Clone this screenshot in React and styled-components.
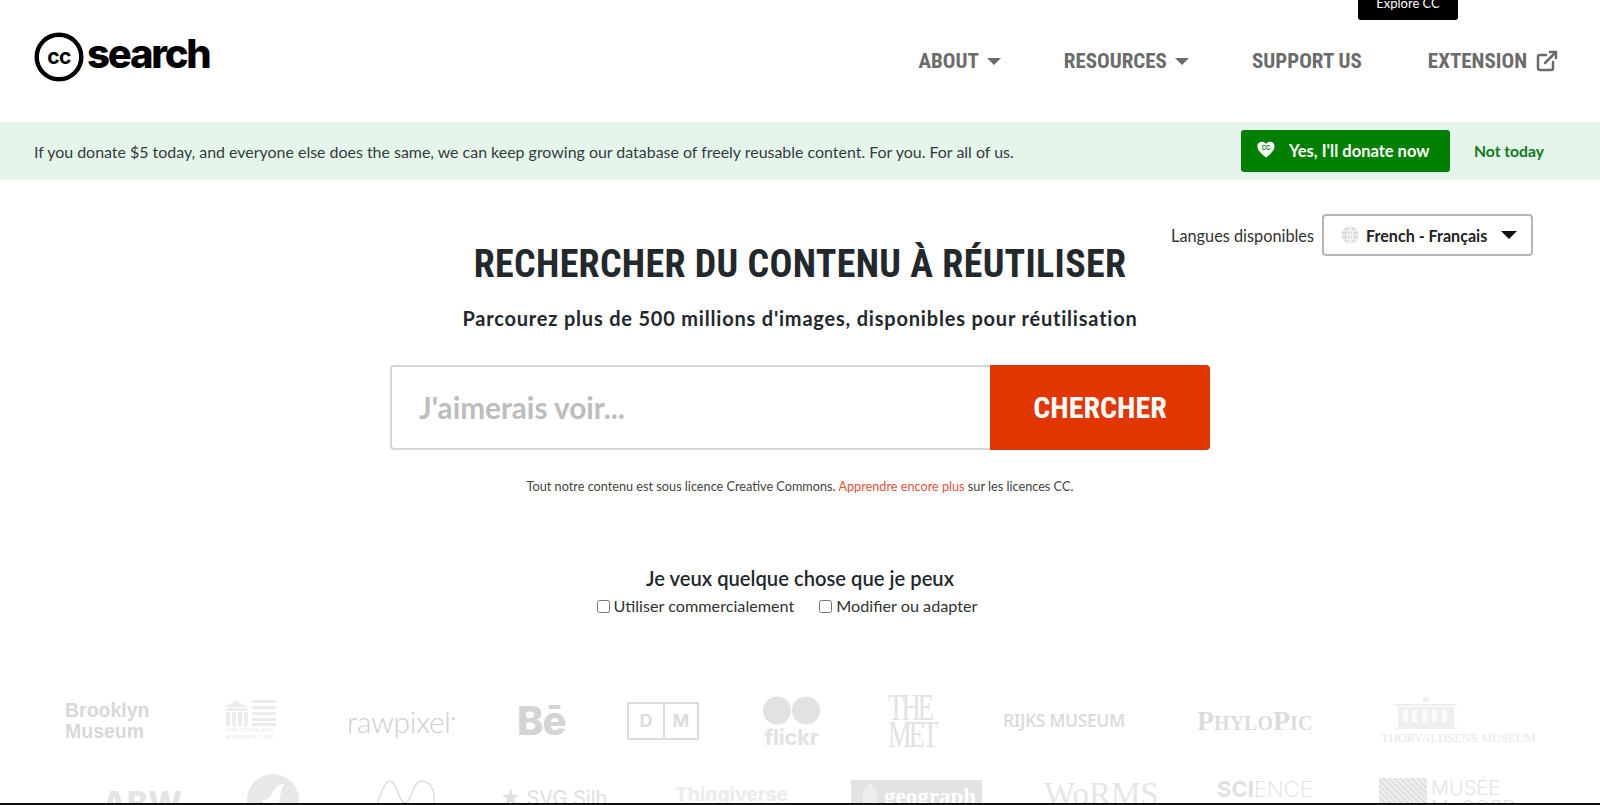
import React from 'react';
import styled, { createGlobalStyle } from 'styled-components';
import { ExternalLink } from 'lucide-react';

const GlobalStyle = createGlobalStyle`
	html, body {
		margin: 0;
		padding: 0;
		background: #fff;
	}
	body {
		font-family: Lato, "Noto Sans", sans-serif;
		color: #23282d;
	}
`;

const condensed = `"Roboto Condensed", "Liberation Sans Narrow", Roboto, sans-serif`;
const body = `Lato, "Noto Sans", sans-serif`;
const serif = `"Liberation Serif", serif`;
const logoGrey = '#dcdcdc';

const Page = styled.div`
	position: relative;
	display: flex;
	flex-direction: column;
	height: 805px;
	overflow: hidden;
	border-bottom: 2px solid #111;
	box-sizing: border-box;
`;

const Tooltip = styled.div`
	position: absolute;
	top: 0;
	left: 1358px;
	width: 100px;
	height: 20px;
	background: #000;
	border-radius: 0 0 3px 3px;
	color: #fff;
	font: 13px/6px ${body};
	text-align: center;
`;

const Header = styled.header`
	display: flex;
	flex: none;
	align-items: center;
	justify-content: space-between;
	height: 122px;
	padding: 0 41px 0 34px;
	box-sizing: border-box;
`;

const Brand = styled.a`
	display: flex;
	align-items: center;
	gap: 3px;
	margin-bottom: 8px;
	color: #000;
	font: 800 40px/48px Inter, Roboto, sans-serif;
	letter-spacing: -2.2px;
`;

const BrandWord = styled.span`
	margin-top: -6px;
`;

const Nav = styled.nav`
	display: flex;
	align-items: center;
	gap: 63px;
`;

const NavLink = styled.a`
	display: flex;
	align-items: center;
	gap: 8px;
	color: #6b6b6b;
	font: 700 21px/30px ${condensed};
	font-stretch: 75%;

	&:last-child {
		margin-left: 3px;
	}
`;

const Caret = styled.span`
	display: inline-block;
	width: 0;
	height: 0;
	border-left: ${p => p.$size}px solid transparent;
	border-right: ${p => p.$size}px solid transparent;
	border-top: ${p => p.$size}px solid ${p => p.$color};
`;

const Banner = styled.section`
	display: flex;
	flex: none;
	align-items: center;
	height: 58px;
	padding: 0 56px 0 34px;
	box-sizing: border-box;
	background: #e6f5ea;
`;

const BannerText = styled.p`
	flex: 1;
	margin: 0;
	color: #333c40;
	font-size: 15.95px;
`;

const DonateButton = styled.a`
	display: flex;
	align-items: center;
	gap: 14px;
	width: 209px;
	height: 42px;
	padding-left: 16px;
	box-sizing: border-box;
	background: #008000;
	border-radius: 3px;
	color: #fff;
	font-size: 16.5px;
	font-weight: 700;

	svg {
		margin-bottom: 3px;
	}
`;

const NotToday = styled.a`
	margin-left: 24px;
	color: #0b7a20;
	font-size: 15.7px;
	font-weight: 700;
`;

const Main = styled.main`
	flex: 1;
	min-height: 0;
`;

const LangRow = styled.div`
	display: flex;
	align-items: center;
	justify-content: flex-end;
	gap: 8px;
	height: 42px;
	margin: 34px 67px -15px 0;
`;

const LangLabel = styled.span`
	color: #333;
	font-size: 16.3px;
`;

const LangSelect = styled.div`
	display: flex;
	align-items: center;
	width: 211px;
	height: 42px;
	padding: 0 14px 0 17px;
	box-sizing: border-box;
	background: #fff;
	border: 2px solid #b5b5b5;
	border-radius: 4px;
	color: #222;
	font-size: 16.1px;
	font-weight: 700;
`;

const LangName = styled.span`
	flex: 1;
	margin-left: 7px;
`;

const Hero = styled.div`
	display: flex;
	flex-direction: column;
	align-items: center;
`;

const Title = styled.h1`
	margin: 0;
	color: #23282d;
	font: 700 38px/46px ${condensed};
	font-stretch: 75%;
	letter-spacing: .3px;
`;

const Subtitle = styled.h2`
	margin: 18px 0 0;
	color: #23282d;
	font-size: 20px;
	line-height: 26px;
	font-weight: 700;
	letter-spacing: .8px;
`;

const SearchBar = styled.form`
	display: flex;
	width: 820px;
	height: 85px;
	margin-top: 34px;
`;

const SearchInput = styled.div`
	display: flex;
	flex: 1;
	align-items: center;
	padding-left: 27px;
	box-sizing: border-box;
	border: 2px solid #d6d6d6;
	border-right: 0;
	border-radius: 4px 0 0 4px;
	color: #bdbdbd;
	font-size: 29.7px;
	font-weight: 700;
`;

const SearchButton = styled.button`
	width: 220px;
	padding: 0;
	background: #e23600;
	border: 0;
	border-radius: 0 4px 4px 0;
	color: #fff;
	font: 700 30px/1 ${condensed};
	font-stretch: 75%;
`;

const LicenseNote = styled.p`
	margin: 27px 0 0;
	color: #444;
	font-size: 12.7px;
	line-height: 18px;
`;

const NoteLink = styled.a`
	color: #e5533d;
`;

const UseTitle = styled.h3`
	margin: 70px 0 0;
	color: #23282d;
	font-size: 20.2px;
	line-height: 26px;
	font-weight: 600;
`;

const UseOptions = styled.div`
	display: flex;
	gap: 25px;
	margin: 4px 26px 0 0;
`;

const UseOption = styled.label`
	display: flex;
	align-items: center;
	color: #333;
	font-size: 16.2px;
	line-height: 22px;
`;

const Check = styled.input.attrs({ type: 'checkbox' })`
	margin: 0 4px 0 0;
`;

const LogoRow = styled.div`
	display: flex;
	align-items: ${p => p.$align};
	height: ${p => p.$height}px;
	margin: ${p => p.$top}px 0 0 ${p => p.$left}px;
`;

const Slot = styled.div`
	flex: none;
	width: ${p => p.$w}px;
	padding-top: ${p => p.$top || 0}px;
	box-sizing: border-box;
`;

const Wordmark = styled.span`
	display: block;
	color: ${p => p.$color || logoGrey};
	font-family: ${p => p.$font || 'Inter, sans-serif'};
	font-size: ${p => p.$size}px;
	font-weight: ${p => p.$weight || 400};
	line-height: ${p => p.$line || 1};
	letter-spacing: ${p => p.$track || 0}px;
	white-space: nowrap;
`;

const SmallCaps = styled(Wordmark)`
	font-variant: small-caps;
`;

const MetMark = styled(Wordmark)`
	transform: scaleX(.7);
	transform-origin: left;
`;

const ThinPart = styled.span`
	font-weight: 200;
`;

const RawDot = styled.sup`
	font-size: 10px;
	line-height: 0;
`;

const LogoStack = styled.div`
	display: flex;
	flex-direction: column;
	align-items: ${p => p.$align || 'center'};
	width: ${p => p.$w}px;
`;

const BuildingWrap = styled.div`
	margin-left: 14px;
`;

const DmBox = styled.div`
	display: grid;
	grid-template-columns: 1fr 1fr;
	width: 72px;
	height: 38px;
	box-sizing: border-box;
	border: 2px solid ${logoGrey};
	color: ${logoGrey};
	font: 700 18px/34px Inter, sans-serif;
	text-align: center;
`;

const DmCell = styled.span`
	& + & {
		border-left: 2px solid ${logoGrey};
	}
`;

const GeographBox = styled.div`
	display: flex;
	justify-content: space-between;
	width: 131px;
	height: 50px;
	padding: 4px 6px 0 12px;
	box-sizing: border-box;
	background: #e3e3e3;
	color: #fff;
	font: 700 23px/26px ${serif};
`;

const MuseeMark = styled.div`
	display: flex;
	gap: 4px;
	width: 121px;
	color: #e4e4e4;
	font: 300 20px/20px Inter, sans-serif;
`;

const Hatch = styled.div`
	flex: none;
	width: 48px;
	height: 40px;
	background: repeating-linear-gradient(45deg, #eee, #eee 2px, #e0e0e0 2px, #e0e0e0 4px);
`;

const CcLogo = () => (
	<svg width="50" height="50" viewBox="0 0 50 50">
		<circle cx="25" cy="25" r="22.3" fill="none" stroke="#000" strokeWidth="4.4" />
		<text x="25" y="32" fontFamily="Inter, sans-serif" fontWeight="700" fontSize="21" letterSpacing="-.5" textAnchor="middle">cc</text>
	</svg>
);

const HeartIcon = () => (
	<svg width="18" height="17" viewBox="0 0 20 18">
		<path d="M10 18C4 13 .5 10 .5 5.5 .5 2.4 3 .5 5.5 .5 7.4.5 9 1.400 10 3c1-1.600 2.600-2.500 4.500-2.500 2.500 0 5 1.900 5 5C19.500 10 16 13 10 18z" fill="#fff" />
		<text x="10" y="9.500" fontFamily="Inter, sans-serif" fontWeight="700" fontSize="6.500" fill="#008000" textAnchor="middle">CC</text>
	</svg>
);

const GlobeIcon = () => (
	<svg width="18" height="18" viewBox="0 0 18 18">
		<circle cx="9" cy="9" r="8.500" fill="#dcdcdc" />
		<path d="M.5 9h17M2 4.800h14M2 13.200h14M9 .5v17M9 .5C5.500 3 5.500 15 9 17.500M9 .5c3.500 2.500 3.500 14.500 0 17" fill="none" stroke="#fff" strokeWidth=".8" />
	</svg>
);

const ClevelandLogo = () => (
	<svg width="51" height="41" viewBox="0 0 51 41">
		<path d="M0 8 11 1 22 8zM1 9h21v3H1zM1 13h4v14H1zM7 13h4v14H7zM13 13h4v14h-4zM19 13h4v14h-4zM27 1h24v3H27zM27 7h24v3H27zM27 13h24v3H27zM27 19h24v3H27zM27 24h24v3H27z" fill="#ececec" />
		<text x="25.500" y="33" fontFamily="Inter, sans-serif" fontSize="5" letterSpacing=".5" fontWeight="700" fill="#efefef" textAnchor="middle">THE CLEVELAND</text>
		<text x="25.500" y="40" fontFamily="Inter, sans-serif" fontSize="5" letterSpacing=".5" fontWeight="700" fill="#efefef" textAnchor="middle">MUSEUM OF ART</text>
	</svg>
);

const FlickrDots = () => (
	<svg width="57" height="31" viewBox="0 0 57 31">
		<circle cx="14" cy="15.500" r="14" fill="#e2e2e2" />
		<circle cx="43" cy="15.500" r="14" fill="#e2e2e2" />
	</svg>
);

const ThorvaldsenBuilding = () => (
	<svg width="62" height="32" viewBox="0 0 62 32">
		<path d="M28 5h6V0h-6zM0 7h62v2H0zM3 10h56v20H3zM0 30h62v2H0z" fill="#efefef" />
		<path d="M8 13h5v12H8zM17 13h5v12h-5zM27 13h5v12h-5zM37 13h5v12h-5zM47 13h5v12h-5z" fill="#fafafa" />
	</svg>
);

const BirdBadge = () => (
	<svg width="52" height="62" viewBox="0 0 52 62">
		<circle cx="26" cy="26" r="26" fill="#e8e8e8" />
		<path d="M14 26c5 0 8-1 11-6 2-4 5-10 12-10-2 3-3 7-4 13-1 7-2 16-4 24h-9c2-6 3-11 3-16-3 0-6-2-9-5z" fill="#fff" />
	</svg>
);

const WaveLogo = () => (
	<svg width="72" height="42" viewBox="0 0 72 42">
		<path d="M2 40C10 24 14 2 21 2s9 22 15 22S44 2 52 2c12 0 18 14 8 38" fill="none" stroke="#dfdfdf" strokeWidth="1.500" />
	</svg>
);

const GeographSeal = () => (
	<svg width="14" height="22" viewBox="0 0 14 22">
		<path d="M5 0h4v4h3v4h2v14H0V8h2V4h3z" fill="#eee" />
	</svg>
);

const App = () => (
	<>
		<GlobalStyle />
		<Page>
			<Tooltip>Explore CC</Tooltip>
			<Header>
				<Brand>
					<CcLogo />
					<BrandWord>search</BrandWord>
				</Brand>
				<Nav>
					<NavLink>ABOUT <Caret $size={7} $color="#6b6b6b" /></NavLink>
					<NavLink>RESOURCES <Caret $size={7} $color="#6b6b6b" /></NavLink>
					<NavLink>SUPPORT US</NavLink>
					<NavLink>EXTENSION <ExternalLink size={24} strokeWidth={2.5} /></NavLink>
				</Nav>
			</Header>
			<Banner>
				<BannerText>If you donate $5 today, and everyone else does the same, we can keep growing our database of freely reusable content. For you. For all of us.</BannerText>
				<DonateButton><HeartIcon />Yes, I'll donate now</DonateButton>
				<NotToday>Not today</NotToday>
			</Banner>
			<Main>
				<LangRow>
					<LangLabel>Langues disponibles</LangLabel>
					<LangSelect>
						<GlobeIcon />
						<LangName>French - Français</LangName>
						<Caret $size={8} $color="#111" />
					</LangSelect>
				</LangRow>
				<Hero>
					<Title>RECHERCHER DU CONTENU À RÉUTILISER</Title>
					<Subtitle>Parcourez plus de 500 millions d'images, disponibles pour réutilisation</Subtitle>
					<SearchBar>
						<SearchInput>J'aimerais voir...</SearchInput>
						<SearchButton type="button">CHERCHER</SearchButton>
					</SearchBar>
					<LicenseNote>Tout notre contenu est sous licence Creative Commons. <NoteLink>Apprendre encore plus</NoteLink> sur les licences CC.</LicenseNote>
					<UseTitle>Je veux quelque chose que je peux</UseTitle>
					<UseOptions>
						<UseOption><Check />Utiliser commercialement</UseOption>
						<UseOption><Check />Modifier ou adapter</UseOption>
					</UseOptions>
				</Hero>
				<LogoRow $align="center" $height={56} $top={76} $left={65}>
					<Slot $w={160}><Wordmark $size={19.5} $weight={700} $line={1.1} $color="#d8d8d8" $font={'"Liberation Sans", sans-serif'}>Brooklyn<br />Museum</Wordmark></Slot>
					<Slot $w={122}><ClevelandLogo /></Slot>
					<Slot $w={170}><Wordmark $size={30} $weight={300} $track={-.4} $color="#cfcfcf" $font="Lato, sans-serif">rawpixel<RawDot>•</RawDot></Wordmark></Slot>
					<Slot $w={110}><Wordmark $size={40} $weight={800} $track={-1} $color="#d4d4d4">Bē</Wordmark></Slot>
					<Slot $w={136}><DmBox><DmCell>D</DmCell><DmCell>M</DmCell></DmBox></Slot>
					<Slot $w={125}>
						<LogoStack $w={57}>
							<FlickrDots />
							<Wordmark $size={22} $weight={700} $color="#e2e2e2" $track={-.2}>flickr</Wordmark>
						</LogoStack>
					</Slot>
					<Slot $w={115}><MetMark $size={38} $line={.72} $track={-4} $font={serif} $color="#e2e2e2">THE<br />MET</MetMark></Slot>
					<Slot $w={194}><Wordmark $size={17.5} $weight={600} $track={-.4} $font={'"Noto Sans", sans-serif'}>RIJKS MUSEUM</Wordmark></Slot>
					<Slot $w={184}><SmallCaps $size={28} $weight={700} $font={serif}>PhyloPic</SmallCaps></Slot>
					<Slot $w={156}>
						<LogoStack $w={156} $align="flex-start">
							<BuildingWrap><ThorvaldsenBuilding /></BuildingWrap>
							<Wordmark $size={12.5} $color="#e8e8e8" $font={serif}>THORVALDSENS MUSEUM</Wordmark>
						</LogoStack>
					</Slot>
				</LogoRow>
				<LogoRow $align="flex-start" $height={62} $top={25} $left={102}>
					<Slot $w={145} $top={14}><Wordmark $size={32} $weight={800} $color="#e4e4e4">ABW</Wordmark></Slot>
					<Slot $w={122}><BirdBadge /></Slot>
					<Slot $w={131} $top={5}><WaveLogo /></Slot>
					<Slot $w={175} $top={14}><Wordmark $size={20} $color="#e0e0e0">★ SVG Silh</Wordmark></Slot>
					<Slot $w={176} $top={11}><Wordmark $size={19} $weight={800} $color="#ececec">Thingiverse</Wordmark></Slot>
					<Slot $w={193} $top={6}><GeographBox><GeographSeal />geograph</GeographBox></Slot>
					<Slot $w={173} $top={4}><Wordmark $size={33} $color="#e6e6e6" $font={serif}>WoRMS</Wordmark></Slot>
					<Slot $w={162} $top={4}><Wordmark $size={22} $weight={700} $color="#e0e0e0">SCI<ThinPart>ENCE</ThinPart></Wordmark></Slot>
					<Slot $w={121} $top={4}><MuseeMark><Hatch />MUSÉE McCORD</MuseeMark></Slot>
				</LogoRow>
			</Main>
		</Page>
	</>
);

export default App;
